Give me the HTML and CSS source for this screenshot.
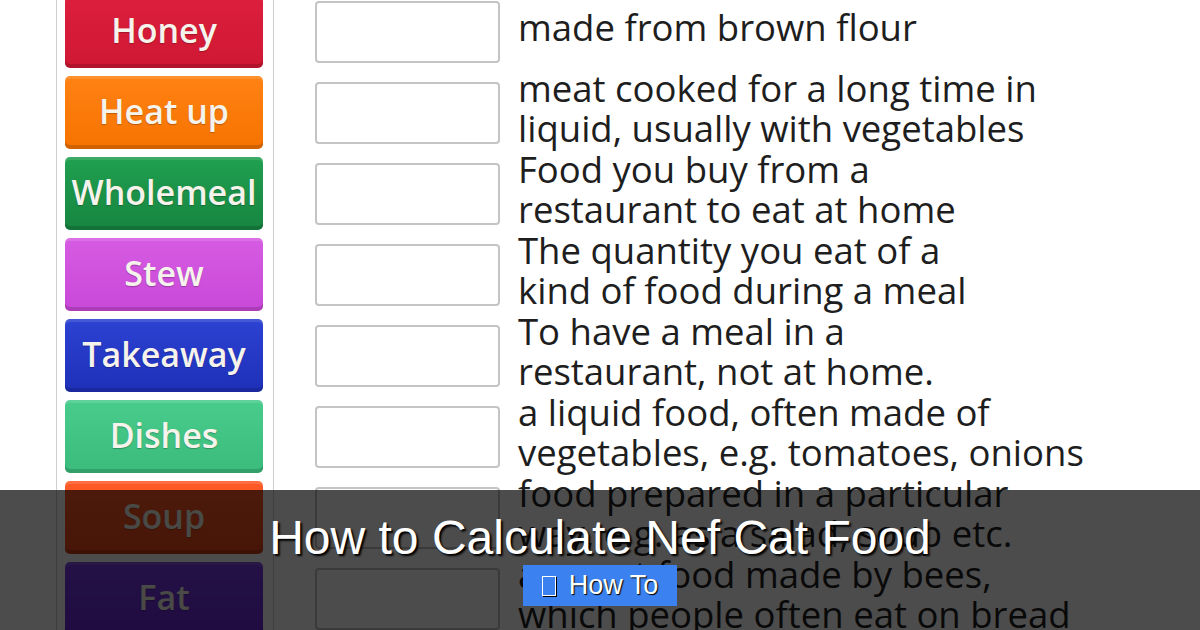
FILE: index.html
```html
<!DOCTYPE html>
<html lang="en">
<head>
    <meta charset="UTF-8">
    <meta name="viewport" content="width=device-width, initial-scale=1.0">
    <title>How to Calculate Nef Cat Food</title>
    <link rel="stylesheet" href="styles.css">
</head>
<body>
    <div class="board">
        <div class="panel">
            <div class="tile honey">Honey</div>
            <div class="tile heat">Heat up</div>
            <div class="tile wholemeal">Wholemeal</div>
            <div class="tile stew">Stew</div>
            <div class="tile takeaway">Takeaway</div>
            <div class="tile dishes">Dishes</div>
            <div class="tile soup">Soup</div>
            <div class="tile fat">Fat</div>
        </div>

        <div class="rows">
            <div class="row">
                <div class="slot"></div>
                <p class="clue">made from brown flour</p>
            </div>
            <div class="row">
                <div class="slot"></div>
                <p class="clue">meat cooked for a long time in<br>liquid, usually with vegetables</p>
            </div>
            <div class="row">
                <div class="slot"></div>
                <p class="clue">Food you buy from a<br>restaurant to eat at home</p>
            </div>
            <div class="row">
                <div class="slot"></div>
                <p class="clue">The quantity you eat of a<br>kind of food during a meal</p>
            </div>
            <div class="row">
                <div class="slot"></div>
                <p class="clue">To have a meal in a<br>restaurant, not at home.</p>
            </div>
            <div class="row">
                <div class="slot"></div>
                <p class="clue">a liquid food, often made of<br>vegetables, e.g. tomatoes, onions</p>
            </div>
            <div class="row">
                <div class="slot"></div>
                <p class="clue">food prepared in a particular<br>way, e.g. as a salad, soup etc.</p>
            </div>
            <div class="row">
                <div class="slot"></div>
                <p class="clue">a sweet food made by bees,<br>which people often eat on bread</p>
            </div>
        </div>
    </div>

    <div class="caption">
        <h1>How to Calculate Nef Cat Food</h1>
        <span class="tag"><i class="tag-icon"></i>How To</span>
    </div>
</body>
</html>
```

FILE: styles.css
```css
* {
    margin: 0;
    padding: 0;
    box-sizing: border-box;
}

body {
    width: 1200px;
    height: 630px;
    overflow: hidden;
    background: #fff;
    font-family: 'Open Sans', 'Liberation Sans', sans-serif;
    position: relative;
}

.board {
    display: flex;
    margin-top: -5px;
    padding-left: 56px;
}

.panel {
    display: flex;
    flex-direction: column;
    gap: 8px;
    padding: 0 10px 40px 8px;
    border-left: 1px solid #cfcfcf;
    border-right: 1px solid #cfcfcf;
}

.tile {
    width: 198px;
    height: 73px;
    border-radius: 5px;
    display: flex;
    align-items: center;
    justify-content: center;
    padding-bottom: 4px;
    color: #f6f3ec;
    font-size: 34px;
    font-weight: 600;
    text-shadow: 0 1px 1px rgba(0,0,0,0.25);
    box-shadow: inset 0 -4px 0 rgba(0,0,0,0.15), inset 0 3px 0 rgba(255,255,255,0.12);
}

.honey { background: linear-gradient(#dc1f3d, #cf1733); }
.heat { background: linear-gradient(#ff8213, #f67300); }
.wholemeal { background: linear-gradient(#20a050, #178540); }
.stew { background: linear-gradient(#d65ce2, #c848d8); }
.takeaway { background: linear-gradient(#2c42d2, #1e30b8); }
.dishes { background: linear-gradient(#48cc8c, #3bbb7c); }
.soup { background: linear-gradient(#ff5b28, #f04a1a); }
.fat { background: linear-gradient(#7a3ae8, #6a28d6); }

.rows {
    display: flex;
    flex-direction: column;
    gap: 8px;
    margin-left: 41px;
}

.row {
    display: flex;
    align-items: center;
    height: 73px;
}

.slot {
    width: 185px;
    height: 62px;
    border: 2px solid #c4c4c4;
    border-radius: 4px;
    background: #fff;
    flex-shrink: 0;
}

.clue {
    margin-left: 18px;
    padding-bottom: 10px;
    font-size: 36.5px;
    line-height: 40px;
    color: #1e1e1e;
    white-space: nowrap;
}

.caption {
    position: absolute;
    left: 0;
    right: 0;
    top: 490px;
    bottom: 0;
    background: rgba(0,0,0,0.7);
    display: flex;
    flex-direction: column;
    align-items: center;
    padding-top: 22px;
}

.caption h1 {
    font-family: 'Liberation Sans', Arial, sans-serif;
    font-weight: 400;
    font-size: 48px;
    line-height: 52px;
    color: #fff;
    text-shadow: 2px 2px 2px #000;
}

.tag {
    display: flex;
    align-items: center;
    gap: 13px;
    margin-top: 1px;
    height: 41px;
    padding: 0 19px 0 19px;
    background: #3b82f0;
    color: #fff;
    font-family: 'Liberation Sans', Arial, sans-serif;
    font-size: 27px;
    text-shadow: 1px 1px 1px #000;
}

.tag-icon {
    width: 14px;
    height: 20px;
    border: 1.5px solid #fff;
    box-shadow: 1px 1px 0 #000;
}
```
